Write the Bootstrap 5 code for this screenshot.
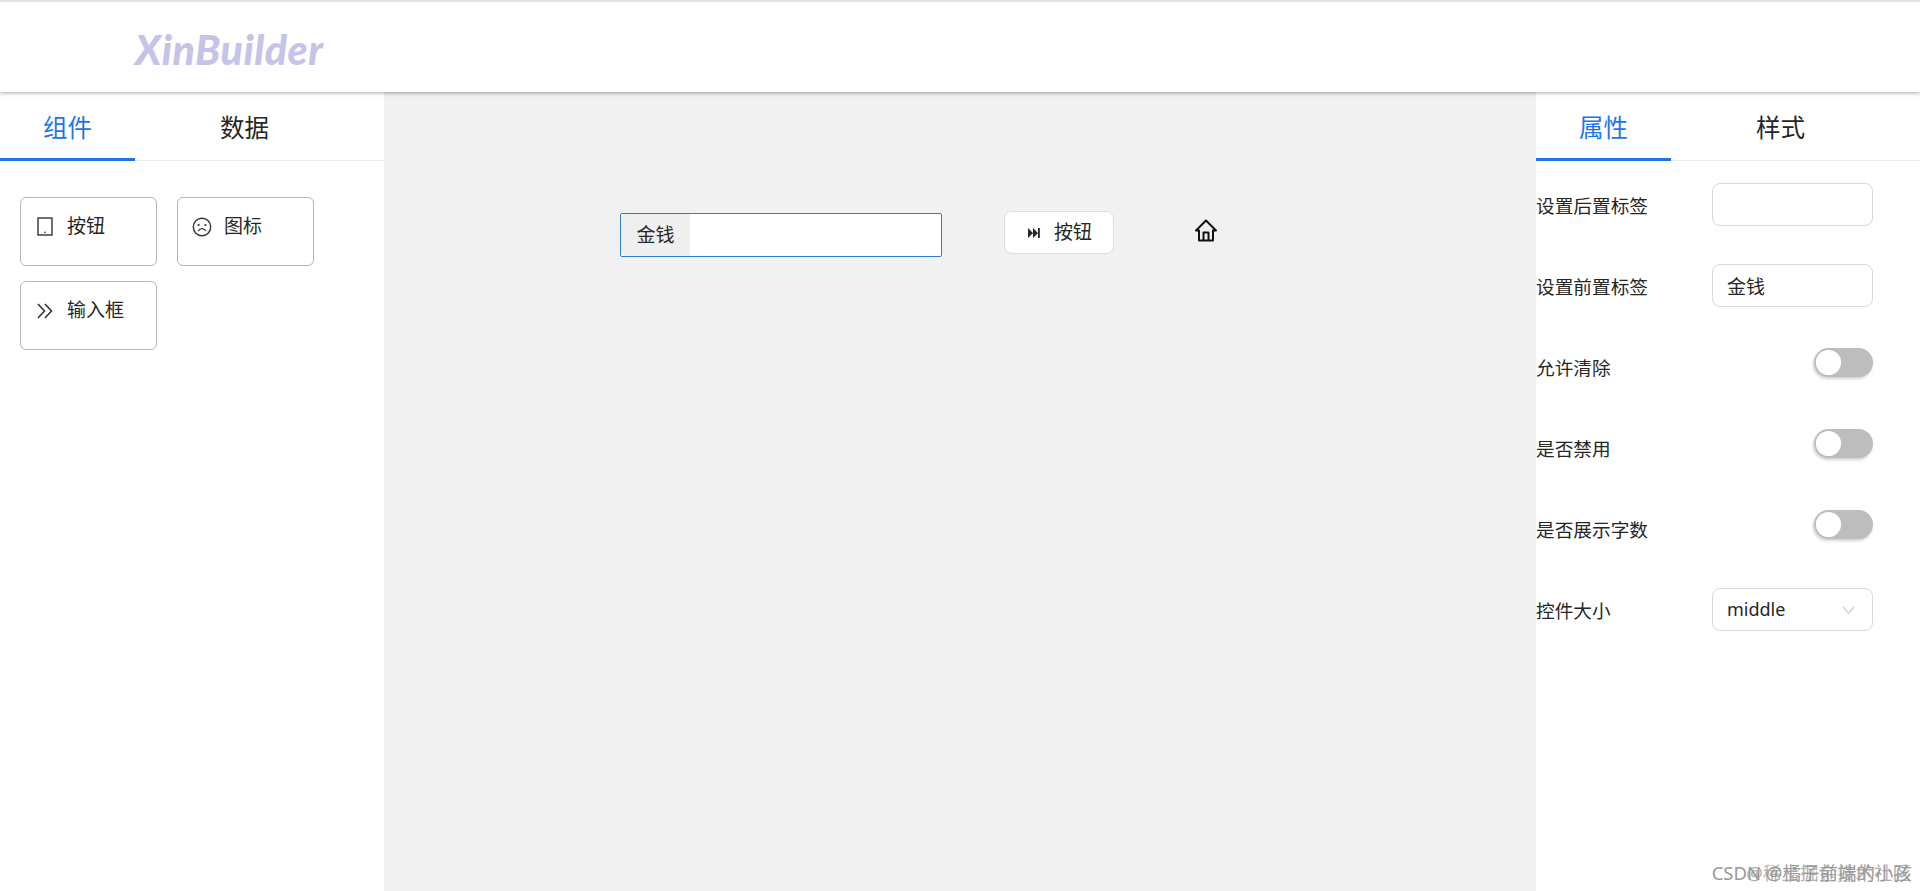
<!DOCTYPE html>
<html lang="zh-CN">
<head>
<meta charset="utf-8">
<title>XinBuilder</title>
<link href="https://cdn.jsdelivr.net/npm/bootstrap@5.3.0/dist/css/bootstrap.min.css" rel="stylesheet">
<style>
html,body{height:100%;}
body{font-family:"Noto Sans","Noto Sans CJK SC",sans-serif;color:#262626;background:#fff;overflow:hidden;}
.app-shell{height:891px;position:relative;}
.top-head{height:92px;border-top:2px solid #e2e2e2;box-shadow:0 1px 4px rgba(0,0,0,.35);padding-left:135px;position:relative;z-index:2;background:#fff;}
.brand-word{font-family:"Lato",sans-serif;font-weight:900;font-style:italic;font-size:41px;line-height:1;color:#c6c3e9;letter-spacing:.5px;margin-top:27px;}
.body-row{height:799px;}
.side-pane{width:384px;flex:none;background:#fff;}
.stage{flex:1 1 auto;background:#f1f1f1;padding:119px 0 0 236px;}
.tab-strip{height:69px;border-bottom:1px solid #ececec;gap:42px;}
.tab-item{width:135px;height:69px;border:0;background:none;padding:7px 0 0;font-size:24.5px;color:#262626;border-bottom:3px solid transparent;}
.tab-item.is-on{color:#1f74ec;border-bottom-color:#1f74ec;}
.widget-grid{padding:36px 20px;gap:15px 20px;}
.widget-tile{width:137px;height:69px;border:1px solid #b4b4b4;border-radius:6px;padding:15px 14px;font-size:19px;gap:12px;line-height:26px;}
.widget-tile svg{flex:none;}
.money-group{width:322px;height:44px;margin-top:2px;border:1px solid #2f7fd8;background:#fff;border-radius:2px;flex-wrap:nowrap;}
.money-group .input-group-text{width:70px;justify-content:center;background:#efefef;border:0;border-right:1px solid #dedede;border-radius:5px 0 0 5px;font-size:19px;padding:0;color:#262626;}
.money-group .form-control{border:0;border-radius:0 5px 5px 0;box-shadow:none;}
.run-btn{width:110px;height:43px;margin-left:62px;background:#fff;border:1px solid #dedede;border-radius:8px;font-size:19px;padding:0 0 0 2px;gap:14px;color:#262626;}
.run-btn:hover{background:#fff;color:#262626;border-color:#dedede;}
.home-glyph{margin:8px 0 0 80px;}
.prop-list{padding-top:22px;gap:38px;}
.prop-row{height:43px;padding-right:47px;}
.prop-name{font-size:18.67px;line-height:24px;padding-top:11px;white-space:nowrap;}
.prop-field{width:161px;height:43px;border:1px solid #d9d9d9;border-radius:8px;font-size:19px;padding:0 14px;color:#262626;box-shadow:none;}
.prop-select{font-family:"Noto Sans",sans-serif;font-size:18px;background-image:url("data:image/svg+xml,%3Csvg xmlns='http://www.w3.org/2000/svg' viewBox='0 0 16 16'%3E%3Cpath fill='none' stroke='%23c4c4c4' stroke-width='1.1' d='M2 5l6 7 6-7'/%3E%3C/svg%3E");background-size:15px 15px;background-position:right 16px center;}
.prop-toggle{margin:3px 0 0;padding:0;min-height:0;}
.prop-toggle .form-check-input{width:59px;height:29px;margin:0;float:none;border:0;border-radius:15px;background-color:#bdbdbd;background-image:url("data:image/svg+xml,%3Csvg xmlns='http://www.w3.org/2000/svg' viewBox='0 0 59 29'%3E%3Ccircle cx='14.5' cy='14.5' r='12.6' fill='%23fff'/%3E%3C/svg%3E");background-size:59px 29px;background-position:0 0;box-shadow:-1px 2px 3px rgba(0,0,0,.18);}
.mark-over{position:absolute;right:8px;bottom:8px;font-size:18.5px;line-height:20px;color:#999;white-space:nowrap;z-index:3;}
.mark-over.under-copy{right:9px;color:#b0b0b0;}
</style>
</head>
<body>
<div class="app-shell d-flex flex-column">
  <header class="top-head d-flex align-items-start">
    <div class="brand-word">XinBuilder</div>
  </header>
  <div class="body-row d-flex">
    <aside class="side-pane">
      <div class="tab-strip d-flex">
        <button type="button" class="tab-item is-on">组件</button>
        <button type="button" class="tab-item">数据</button>
      </div>
      <div class="widget-grid d-flex flex-wrap">
        <div class="widget-tile d-flex align-items-start">
          <svg width="20" height="20" viewBox="-2 0 20 20" class="mt-1"><rect x="1" y="1" width="14" height="17" fill="none" stroke="#333" stroke-width="1.4"/><circle cx="8" cy="15.4" r=".8" fill="#333"/></svg>
          <span>按钮</span>
        </div>
        <div class="widget-tile d-flex align-items-start">
          <svg width="20" height="20" viewBox="0 0 20 20" class="mt-1"><circle cx="10" cy="10" r="8.7" fill="none" stroke="#333" stroke-width="1.4"/><circle cx="6.6" cy="8" r="1.1" fill="#333"/><circle cx="13.4" cy="8" r="1.1" fill="#333"/><path d="M6.2 14c1-1.7 2.3-2.4 3.8-2.4s2.8.7 3.8 2.4" fill="none" stroke="#333" stroke-width="1.3"/></svg>
          <span>图标</span>
        </div>
        <div class="widget-tile d-flex align-items-start">
          <svg width="20" height="20" viewBox="-2 0 20 20" class="mt-1"><path d="M1 3l6.5 7L1 17M8 3l6.5 7L8 17" fill="none" stroke="#333" stroke-width="1.6"/></svg>
          <span>输入框</span>
        </div>
      </div>
    </aside>
    <main class="stage">
      <div class="d-flex align-items-start">
        <div class="input-group money-group">
          <span class="input-group-text">金钱</span>
          <input type="text" class="form-control" aria-label="金钱">
        </div>
        <button type="button" class="btn run-btn d-flex align-items-center justify-content-center">
          <svg width="12" height="10" viewBox="0 0 12 10"><path d="M0 0l5 5-5 5zM5 0l5 5-5 5z" fill="#262626"/><rect x="10" width="1.8" height="10" fill="#262626"/></svg>
          <span>按钮</span>
        </button>
        <svg class="home-glyph" width="24" height="23" viewBox="0 0 24 23"><path d="M12 1.5L2 11.5h3V21.5h14V11.5h3zM9.5 21.5v-8h5v8" fill="none" stroke="#111" stroke-width="2" stroke-linejoin="round"/></svg>
      </div>
    </main>
    <aside class="side-pane">
      <div class="tab-strip d-flex">
        <button type="button" class="tab-item is-on">属性</button>
        <button type="button" class="tab-item">样式</button>
      </div>
      <div class="prop-list d-flex flex-column">
        <div class="prop-row d-flex justify-content-between align-items-start">
          <label class="prop-name">设置后置标签</label>
          <input class="form-control prop-field" type="text">
        </div>
        <div class="prop-row d-flex justify-content-between align-items-start">
          <label class="prop-name">设置前置标签</label>
          <input class="form-control prop-field" type="text" value="金钱">
        </div>
        <div class="prop-row d-flex justify-content-between align-items-start">
          <label class="prop-name">允许清除</label>
          <div class="form-check form-switch prop-toggle"><input class="form-check-input" type="checkbox" role="switch"></div>
        </div>
        <div class="prop-row d-flex justify-content-between align-items-start">
          <label class="prop-name">是否禁用</label>
          <div class="form-check form-switch prop-toggle"><input class="form-check-input" type="checkbox" role="switch"></div>
        </div>
        <div class="prop-row d-flex justify-content-between align-items-start">
          <label class="prop-name">是否展示字数</label>
          <div class="form-check form-switch prop-toggle"><input class="form-check-input" type="checkbox" role="switch"></div>
        </div>
        <div class="prop-row d-flex justify-content-between align-items-start">
          <label class="prop-name">控件大小</label>
          <select class="form-select prop-field prop-select"><option>middle</option></select>
        </div>
      </div>
    </aside>
  </div>
  <div class="mark-over under-copy">@稀土掘金技术社区</div>
  <div class="mark-over">CSDN @橘子前端的小孩</div>
</div>
<script src="https://cdn.jsdelivr.net/npm/bootstrap@5.3.0/dist/js/bootstrap.bundle.min.js"></script>
</body>
</html>
